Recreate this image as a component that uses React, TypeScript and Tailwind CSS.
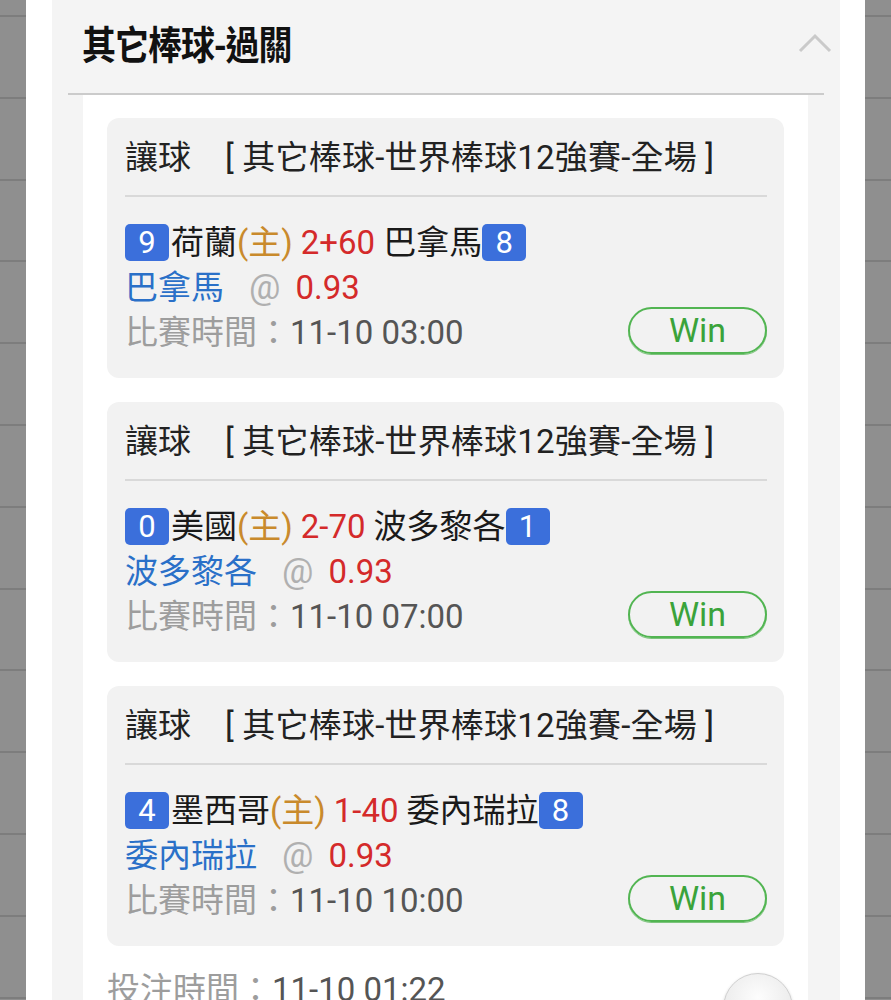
import React from 'react';

interface Bet {
  home: string;
  homeNo: string;
  line: string;
  away: string;
  awayNo: string;
  pick: string;
  odds: string;
  time: string;
}

const bets: Bet[] = [
  { home: '荷蘭', homeNo: '9', line: '2+60', away: '巴拿馬', awayNo: '8', pick: '巴拿馬', odds: '0.93', time: '11-10 03:00' },
  { home: '美國', homeNo: '0', line: '2-70', away: '波多黎各', awayNo: '1', pick: '波多黎各', odds: '0.93', time: '11-10 07:00' },
  { home: '墨西哥', homeNo: '4', line: '1-40', away: '委內瑞拉', awayNo: '8', pick: '委內瑞拉', odds: '0.93', time: '11-10 10:00' },
];

const font = { fontFamily: "Roboto, 'Noto Sans CJK TC', sans-serif" };

const Strip: React.FC = () => (
  <div className="w-[26px] shrink-0 bg-[#8f8f8f] flex flex-col">
    <div className="h-[17px] shrink-0 border-b-[2px] border-[#7d7d7d]" />
    {Array.from({ length: 13 }).map((_, i) => (
      <div key={i} className="h-[81.8px] shrink-0 border-b-[2px] border-[#7d7d7d]" />
    ))}
  </div>
);

const Badge: React.FC<{ n: string }> = ({ n }) => (
  <span className="inline-flex w-[44px] h-[37px] items-center justify-center rounded-[5px] bg-[#3b6fdb] text-white text-[31px]">
    {n}
  </span>
);

const BetCard: React.FC<{ bet: Bet }> = ({ bet }) => (
  <div className="bg-[#f2f2f2] rounded-[12px] pl-[18px] pr-[17px] pt-[17px] pb-[23px]">
    <div className="flex items-center h-[45px] text-[#222]">
      <span>讓球</span>
      <span className="ml-[34px] tracking-[0.2px]">[ 其它棒球-世界棒球12強賽-全場 ]</span>
    </div>
    <div className="h-[2px] bg-[#d9d9d9] mt-[15px] mb-[23px]" />
    <div className="flex items-center h-[45px] text-[#1a1a1a]">
      <Badge n={bet.homeNo} />
      <span className="ml-[2px]">{bet.home}</span>
      <span className="text-[#c98a2c]">(主)</span>
      <span className="ml-[8px] text-[#d42a2a]">{bet.line}</span>
      <span className="ml-[8px]">{bet.away}</span>
      <Badge n={bet.awayNo} />
    </div>
    <div className="flex items-center h-[45px]">
      <span className="text-[#2a70c8]">{bet.pick}</span>
      <span className="ml-[25px] text-[#b0b0b0] text-[35px]">@</span>
      <span className="ml-[15px] text-[#d42a2a]">{bet.odds}</span>
    </div>
    <div className="flex items-center justify-between h-[45px]">
      <div>
        <span className="text-[#9d9d9d]">比賽時間：</span>
        <span className="text-[#555]">{bet.time}</span>
      </div>
      <div className="w-[139px] h-[47px] -mt-[4px] rounded-full border-[2px] border-[#52b552] flex items-center justify-center text-[#3aa33a] text-[34px] shadow-[0_1px_0_#7cc47c]">
        Win
      </div>
    </div>
  </div>
);

export default function App() {
  return (
    <div className="h-[1000px] w-[891px] overflow-hidden flex bg-white text-[33px] leading-[45px]" style={font}>
      <Strip />
      <div className="w-[26px] shrink-0 bg-white" />
      <div className="flex-1 bg-[#f4f4f4] flex flex-col">
        <div className="h-[93px] shrink-0 flex items-center justify-between pl-[30px] pr-[8px] pb-[8px]">
          <span
            className="text-[34px] font-bold text-[#111] tracking-[-1px] scale-y-[1.15]"
            style={{ fontFamily: "'Noto Sans CJK TC', sans-serif" }}
          >
            其它棒球-過關
          </span>
          <svg width="34" height="22" viewBox="0 0 34 22">
            <polyline points="2,19 17,4 32,19" fill="none" stroke="#cacaca" strokeWidth="3" />
          </svg>
        </div>
        <div className="mx-[16px] h-[2px] shrink-0 bg-[#cbcbcb]" />
        <div className="ml-[31px] mr-[32px] flex-1 bg-white px-[24px] pt-[23px] flex flex-col gap-[24px]">
          {bets.map((b, i) => (
            <BetCard key={i} bet={b} />
          ))}
          <div className="flex items-start justify-between -mt-[3px]">
            <div>
              <span className="text-[#9d9d9d]">投注時間：</span>
              <span className="text-[#555]">11-10 01:22</span>
            </div>
            <div className="w-[70px] h-[70px] shrink-0 mt-[6px] -mr-[9px] rounded-full border border-[#cfcfcf] bg-[radial-gradient(circle_at_50%_35%,#fdfdfd,#e2e2e2)] shadow-[0_1px_3px_rgba(0,0,0,0.15)]" />
          </div>
        </div>
      </div>
      <div className="w-[25px] shrink-0 bg-white" />
      <Strip />
    </div>
  );
}
